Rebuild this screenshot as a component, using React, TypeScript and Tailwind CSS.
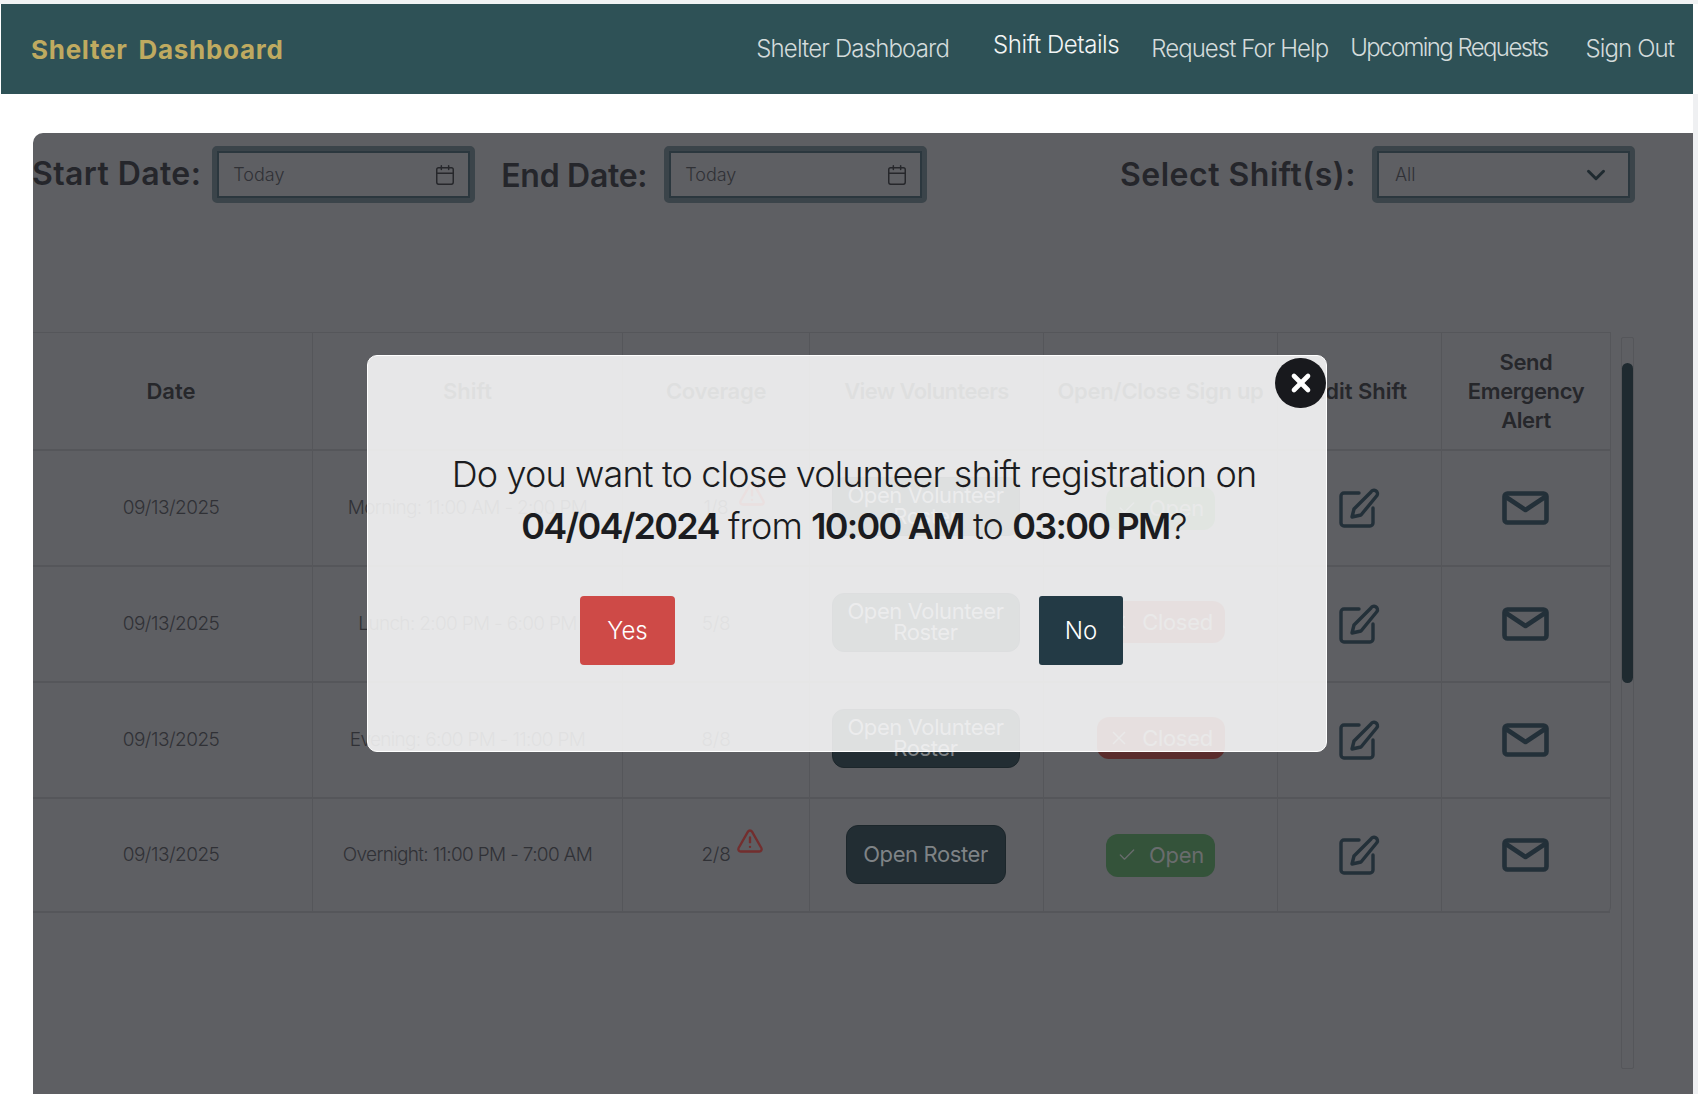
import { Calendar, ChevronDown, Check, X, TriangleAlert } from "lucide-react";

const rows = [
  { shift: "Morning: 11:00 AM - 2:00 PM", cov: "1/8", warn: true, roster: "Open Volunteer Roster", open: true },
  { shift: "Lunch: 2:00 PM - 6:00 PM", cov: "5/8", warn: false, roster: "Open Volunteer Roster", open: false },
  { shift: "Evening: 6:00 PM - 11:00 PM", cov: "8/8", warn: false, roster: "Open Volunteer Roster", open: false },
  { shift: "Overnight: 11:00 PM - 7:00 AM", cov: "2/8", warn: true, roster: "Open Roster", open: true },
];

function EditIcon() {
  return (
    <svg width="42" height="40" viewBox="0 0 42 40" fill="none" stroke="#233039" strokeWidth="3.4" strokeLinecap="round" strokeLinejoin="round">
      <path d="M20 5H5a3 3 0 0 0-3 3v27a3 3 0 0 0 3 3h26a3 3 0 0 0 3-3V20" />
      <path d="M32 4a3.300 3.300 0 0 1 6 3.500L22 27l-9 2 2-8Z" />
    </svg>
  );
}

function MailIcon() {
  return (
    <svg width="47" height="34" viewBox="0 0 47 34" fill="none" stroke="#233039" strokeWidth="4.6" strokeLinejoin="round" strokeLinecap="round">
      <rect x="2.500" y="2.500" width="42" height="29" rx="3" />
      <path d="M4 6l19.500 13L43 6" />
    </svg>
  );
}

function DateBox() {
  return (
    <div className="w-[263px] h-[57px] shrink-0 rounded-[5px] border-[5px] border-[#3b444a] bg-[#5e5f63] shadow-[inset_0_0_0_2px_#2b373e] flex items-center pl-[16px] pr-[14px] justify-between">
      <span className="text-[18px] font-light text-[#303136]">Today</span>
      <Calendar size={22} strokeWidth={1.6} className="text-[#26272b]" />
    </div>
  );
}

function Cell({ children, border = true, heightClass = "h-[116px]" }: { children: React.ReactNode; border?: boolean; heightClass?: string }) {
  return (
    <div className={`${heightClass} flex items-center justify-center text-center border-b-2 border-[#55565a] ${border ? "border-r" : ""}`}>
      {children}
    </div>
  );
}

export default function App() {
  return (
    <div className="relative w-[1698px] h-[1094px] overflow-hidden bg-white font-[Inter,sans-serif] text-[#26272b]">
      <div className="h-[4px] bg-[#f1f3f4]" />
      <nav className="ml-[1px] mr-[5px] h-[90px] bg-[#2e5156] flex items-center text-[24px] font-light text-[#d3dbdb]">
        <span className="ml-[30px] text-[26px] font-bold tracking-[0.72px] [word-spacing:4px] text-[#bfaa60]">Shelter Dashboard</span>
        <span className="ml-auto tracking-[-0.85px]">Shelter Dashboard</span>
        <span className="ml-[44px] -mt-[8px] tracking-[-0.43px] text-[#f2f5f5]">Shift Details</span>
        <span className="ml-[32px] tracking-[-0.95px]">Request For Help</span>
        <span className="ml-[22px] -mt-[2px] tracking-[-1.6px]">Upcoming Requests</span>
        <span className="ml-[38px] mr-[19px] tracking-[-0.9px]">Sign Out</span>
      </nav>
      <div className="flex h-[1000px]">
        <div className="w-[33px] shrink-0 bg-white" />
        <main className="flex-1 mt-[39px] rounded-tl-[10px] bg-[#5e5f63] pt-[13px]">
          <div className="flex items-center">
            <span className="-mt-[1px] -ml-[1px] text-[32px] font-semibold tracking-[0.4px] text-[#25262b]">Start Date:</span>
            <div className="ml-[11px]"><DateBox /></div>
            <span className="ml-[26px] mt-[2px] text-[32px] font-semibold tracking-[-0.3px] text-[#25262b]">End Date:</span>
            <div className="ml-[17px]"><DateBox /></div>
            <span className="ml-auto text-[32px] font-semibold tracking-[0.5px] text-[#25262b]">Select Shift(s):</span>
            <div className="ml-[16px] mr-[58px] w-[263px] h-[57px] rounded-[5px] border-[5px] border-[#3b444a] shadow-[inset_0_0_0_2px_#2b373e] flex items-center justify-between pl-[18px] pr-[19px]">
              <span className="text-[18px] font-light text-[#303136]">All</span>
              <ChevronDown size={30} strokeWidth={2.4} className="text-[#1f2a30]" />
            </div>
          </div>
          <div className="mt-[129px] flex items-start">
            <div className="w-[1578px] shrink-0 border-t border-[#55565a] border-r rounded-br-[6px] grid grid-cols-[280px_310px_187px_234px_234px_164px_168px] text-[22px] font-semibold">
              <Cell heightClass="h-[118px]"><span className="pr-[3px]">Date</span></Cell>
              <Cell heightClass="h-[118px]">Shift</Cell>
              <Cell heightClass="h-[118px]"><span className="tracking-[-0.3px]">Coverage</span></Cell>
              <Cell heightClass="h-[118px]"><span className="tracking-[-0.6px]">View Volunteers</span></Cell>
              <Cell heightClass="h-[118px]"><span className="tracking-[-0.3px]">Open/Close Sign up</span></Cell>
              <Cell heightClass="h-[118px]">Edit Shift</Cell>
              <Cell heightClass="h-[118px]" border={false}><span className="w-[130px] leading-[29px] tracking-[-0.4px]">Send Emergency Alert</span></Cell>
              {rows.map((r, i) => {
                const h = i === 3 ? "h-[114px]" : "h-[116px]";
                return (
                  <div key={r.shift} className="contents font-light text-[19px] tracking-[-0.3px] text-[#303136]">
                    <Cell heightClass={h}><span className="pr-[3px] tracking-[-0.5px]">09/13/2025</span></Cell>
                    <Cell heightClass={h}><span className="tracking-[-0.67px]">{r.shift}</span></Cell>
                    <Cell heightClass={h}>
                      <span className="relative">
                        {r.cov}
                        {r.warn && (
                          <TriangleAlert size={28} strokeWidth={2} className="absolute left-[34px] -top-[14px] text-[#732e2e]" />
                        )}
                      </span>
                    </Cell>
                    <Cell heightClass={h}>
                      <span className={`${r.roster === "Open Roster" ? "w-[160px] h-[59px] mb-[2px]" : "w-[188px] h-[59px] mb-[4px] leading-[21px] px-[10px]"} mr-[2px] flex items-center justify-center rounded-[12px] border border-[#1c262b] bg-[#222d33] text-[22px] font-normal tracking-[-0.4px] text-[#7f8386]`}>
                        {r.roster}
                      </span>
                    </Cell>
                    <Cell heightClass={h}>
                      {r.open ? (
                        <span className="w-[109px] h-[43px] flex items-center justify-center gap-[12px] rounded-[12px] bg-[#34533a] text-[22px] font-normal text-[#696c6d]">
                          <Check size={20} strokeWidth={1.6} />Open
                        </span>
                      ) : (
                        <span className="w-[128px] h-[42px] mb-[4px] flex items-center justify-center gap-[12px] rounded-[12px] bg-[#5a2c2c] text-[22px] font-normal text-[#6f6a6a]">
                          <X size={22} strokeWidth={1.6} />Closed
                        </span>
                      )}
                    </Cell>
                    <Cell heightClass={h}><EditIcon /></Cell>
                    <Cell heightClass={h} border={false}><span className="pr-[2px]"><MailIcon /></span></Cell>
                  </div>
                );
              })}
            </div>
            <div className="ml-[10px] mt-[5px] w-[13px] h-[732px] border border-[#55565a] rounded-[2px]">
              <div className="mt-[25px] h-[320px] w-[11px] rounded-full bg-[#1f2a30]" />
            </div>
          </div>
        </main>
        <div className="w-[5px] shrink-0 bg-[#eff0f2]" />
      </div>

      <div className="absolute left-[367px] top-[355px] w-[960px] h-[397px] rounded-[10px] border border-white bg-white/85 pt-[92px] text-center">
        <p className="pl-[14px] text-[36px] leading-[52px] font-light tracking-[-0.85px] text-[#1b1c20]">
          Do you want to close volunteer shift registration on
          <br />
          <b className="font-semibold tracking-[-1.75px]">04/04/2024</b> from <b className="font-semibold tracking-[-1.75px]">10:00 AM</b> to <b className="font-semibold tracking-[-1.75px]">03:00 PM</b>?
        </p>
        <div className="mt-[44px] flex justify-center gap-[364px] pl-[9px]">
          <button className="w-[95px] h-[69px] rounded-[4px] bg-[#ce4a47] text-[24px] font-light text-white">Yes</button>
          <button className="w-[84px] h-[69px] rounded-[3px] bg-[#233a45] text-[24px] font-light text-white">No</button>
        </div>
        <button className="absolute right-0 top-[2px] w-[51px] h-[50px] rounded-full bg-[#18191d] flex items-center justify-center text-white">
          <X size={28} strokeWidth={4} />
        </button>
      </div>
    </div>
  );
}
